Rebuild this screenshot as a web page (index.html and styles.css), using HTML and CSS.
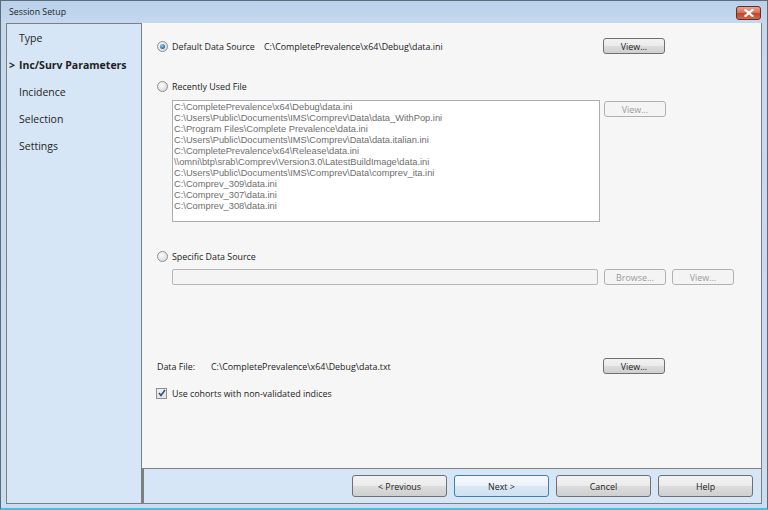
FILE: index.html
```html
<!DOCTYPE html>
<html lang="en">
<head>
  <meta charset="UTF-8">
  <title>Session Setup</title>
  <link rel="stylesheet" href="styles.css">
</head>
<body>
  <div class="window">
    <div class="titlebar">
      <span class="title">Session Setup</span>
      <span class="close">
        <svg width="10" height="8" viewBox="0 0 10 8">
          <path d="M1.5 1 L8.5 7 M8.5 1 L1.5 7" stroke="#fff" stroke-width="2.2" stroke-linecap="square"/>
        </svg>
      </span>
    </div>

    <div class="client">
      <!-- Pasos del asistente -->
      <ul class="steps">
        <li>Type</li>
        <li class="current">Inc/Surv Parameters</li>
        <li>Incidence</li>
        <li>Selection</li>
        <li>Settings</li>
      </ul>

      <div class="main">
        <div class="content">
          <div class="row row-default">
            <div class="path-area">
              <span class="radio checked"></span>
              <span class="option-label wide">Default Data Source</span>
              <span class="path">C:\CompletePrevalence\x64\Debug\data.ini</span>
            </div>
            <button class="btn">View...</button>
          </div>

          <div class="row row-recent">
            <span class="radio"></span>
            <span class="option-label">Recently Used File</span>
          </div>

          <div class="list-row">
            <ul class="listbox">
              <li>C:\CompletePrevalence\x64\Debug\data.ini</li>
              <li>C:\Users\Public\Documents\IMS\Comprev\Data\data_WithPop.ini</li>
              <li>C:\Program Files\Complete Prevalence\data.ini</li>
              <li>C:\Users\Public\Documents\IMS\Comprev\Data\data.italian.ini</li>
              <li>C:\CompletePrevalence\x64\Release\data.ini</li>
              <li>\\omni\btp\srab\Comprev\Version3.0\LatestBuildImage\data.ini</li>
              <li>C:\Users\Public\Documents\IMS\Comprev\Data\comprev_ita.ini</li>
              <li>C:\Comprev_309\data.ini</li>
              <li>C:\Comprev_307\data.ini</li>
              <li>C:\Comprev_308\data.ini</li>
            </ul>
            <button class="btn" disabled>View...</button>
          </div>

          <div class="row row-specific">
            <span class="radio"></span>
            <span class="option-label">Specific Data Source</span>
          </div>

          <div class="input-row">
            <input type="text" class="textbox" disabled>
            <button class="btn" disabled>Browse...</button>
            <button class="btn" disabled>View...</button>
          </div>

          <div class="row row-datafile">
            <div class="path-area">
              <span class="field-label">Data File:</span>
              <span class="path">C:\CompletePrevalence\x64\Debug\data.txt</span>
            </div>
            <button class="btn">View...</button>
          </div>

          <div class="row row-check">
            <span class="checkbox">
              <svg width="8" height="8" viewBox="0 0 8 8">
                <path d="M1 4 L3 6.5 L7 1" fill="none" stroke="#2d4f86" stroke-width="1.6"/>
              </svg>
            </span>
            <span class="option-label">Use cohorts with non-validated indices</span>
          </div>
        </div>

        <div class="footer">
          <button class="btn big">&lt; Previous</button>
          <button class="btn big default">Next &gt;</button>
          <button class="btn big">Cancel</button>
          <button class="btn big">Help</button>
        </div>
      </div>
    </div>
  </div>
</body>
</html>
```

FILE: styles.css
```css
body {
  margin: 0;
  font-family: "Open Sans", "Noto Sans", sans-serif;
  font-size: 8.9px;
  color: #1a1a1a;
}
.window {
  width: 768px;
  height: 510px;
  box-sizing: border-box;
  background: linear-gradient(to bottom, #b9d1ea 0, #c4d8ee 22px, #cbddf1 100%);
  border: 1px solid #5d6a78;
  border-bottom: 2px solid #3cc4e6;
  display: flex;
  flex-direction: column;
  padding: 0 5px 4px 5px;
}
.titlebar {
  height: 22px;
  display: flex;
  align-items: center;
  justify-content: space-between;
}
.title {
  font-size: 8.8px;
  color: #1e1e1e;
  padding-left: 3px;
}
.close {
  width: 23px;
  height: 12px;
  margin-top: 2px;
  margin-right: 1px;
  border: 1px solid #6c2a22;
  border-radius: 3px;
  background: linear-gradient(to bottom, #e3a597 0, #d5735f 45%, #c1442c 55%, #cf6a4e 100%);
  display: flex;
  align-items: center;
  justify-content: center;
}
.client {
  flex: 1;
  display: flex;
}
.steps {
  list-style: none;
  margin: 0;
  padding: 1px 0 0 12px;
  width: 122px;
  background-color: #d6e6f6;
  border: 1px solid #7f7f7f;
  font-size: 10.5px;
}
.steps li {
  height: 27px;
  line-height: 27px;
  color: #1e1e1e;
}
.steps li.current {
  font-weight: bold;
}
.steps li.current::before {
  content: ">";
  display: inline-block;
  width: 10px;
  margin-left: -10px;
}
.main {
  flex: 1;
  display: flex;
  flex-direction: column;
}
.content {
  flex: 1;
  background-color: #f6f6f6;
  border-right: 1px solid #7f7f7f;
  padding-left: 15px;
}
.row {
  display: flex;
  align-items: center;
  height: 16px;
}
.path-area {
  width: 446px;
  display: flex;
  align-items: center;
}
.row-default {
  margin-top: 15px;
}
.row-recent {
  margin-top: 24px;
}
.row-specific {
  margin-top: 26px;
}
.row-datafile {
  margin-top: 73px;
}
.row-check {
  margin-top: 11px;
}
.radio {
  width: 9px;
  height: 9px;
  border: 1px solid #8e8f8f;
  border-radius: 50%;
  background: radial-gradient(circle at 40% 35%, #fdfdfd 0, #e3e3e3 60%, #cfcfcf 100%);
  flex-shrink: 0;
  position: relative;
}
.radio.checked::after {
  content: "";
  position: absolute;
  left: 2px;
  top: 2px;
  width: 5px;
  height: 5px;
  border-radius: 50%;
  background: radial-gradient(circle at 40% 35%, #9fd3f6 0, #2c78b4 60%, #1b4f86 100%);
}
.option-label {
  margin-left: 4px;
}
.option-label.wide {
  width: 92px;
}
.field-label {
  width: 54px;
}
.checkbox {
  width: 9px;
  height: 9px;
  border: 1px solid #8e8f8f;
  background: linear-gradient(to bottom, #f0f0f0, #e4e4e4);
  display: flex;
  align-items: center;
  justify-content: center;
  margin-left: -1px;
  margin-right: 1px;
}
.list-row {
  display: flex;
  align-items: flex-start;
  gap: 4px;
  margin: 6px 0 0 15px;
}
.listbox {
  list-style: none;
  margin: 0;
  padding: 1px 1px 5px;
  width: 424px;
  height: 114px;
  background-color: #fff;
  border: 1px solid #abadb3;
  color: #6d6d6d;
  font-family: "Liberation Sans", Arial, sans-serif;
  font-size: 9.3px;
  line-height: 11px;
}
.list-row .btn {
  margin-top: 1px;
}
.input-row {
  display: flex;
  gap: 6px;
  margin: 5px 0 0 15px;
}
.textbox {
  width: 426px;
  height: 16px;
  box-sizing: border-box;
  margin: 0;
  border: 1px solid #b7b7b7;
  border-radius: 2px;
  background-color: #f4f4f4;
}
.btn {
  width: 62px;
  height: 16px;
  box-sizing: border-box;
  margin: 0;
  padding: 0;
  font-family: inherit;
  font-size: 8.9px;
  color: #1a1a1a;
  border: 1px solid #707070;
  border-radius: 3px;
  background: linear-gradient(to bottom, #f2f2f2 0, #ebebeb 50%, #dddddd 50%, #cfcfcf 100%);
}
.btn:disabled {
  color: #9a9a9a;
  border-color: #adb2b5;
  background: #f4f4f4;
}
.footer {
  height: 36px;
  box-sizing: border-box;
  background-color: #d6e6f6;
  border: 1px solid #7f7f7f;
  border-left-width: 2px;
  display: flex;
  justify-content: flex-end;
  align-items: center;
  gap: 7px;
  padding-right: 8px;
}
.btn.big {
  width: 95px;
  height: 22px;
}
.btn.default {
  border-color: #3c7fb1;
  background: linear-gradient(to bottom, #f4f8fc 0, #eaf2fa 50%, #dbe8f4 50%, #d0e1f1 100%);
}
```
